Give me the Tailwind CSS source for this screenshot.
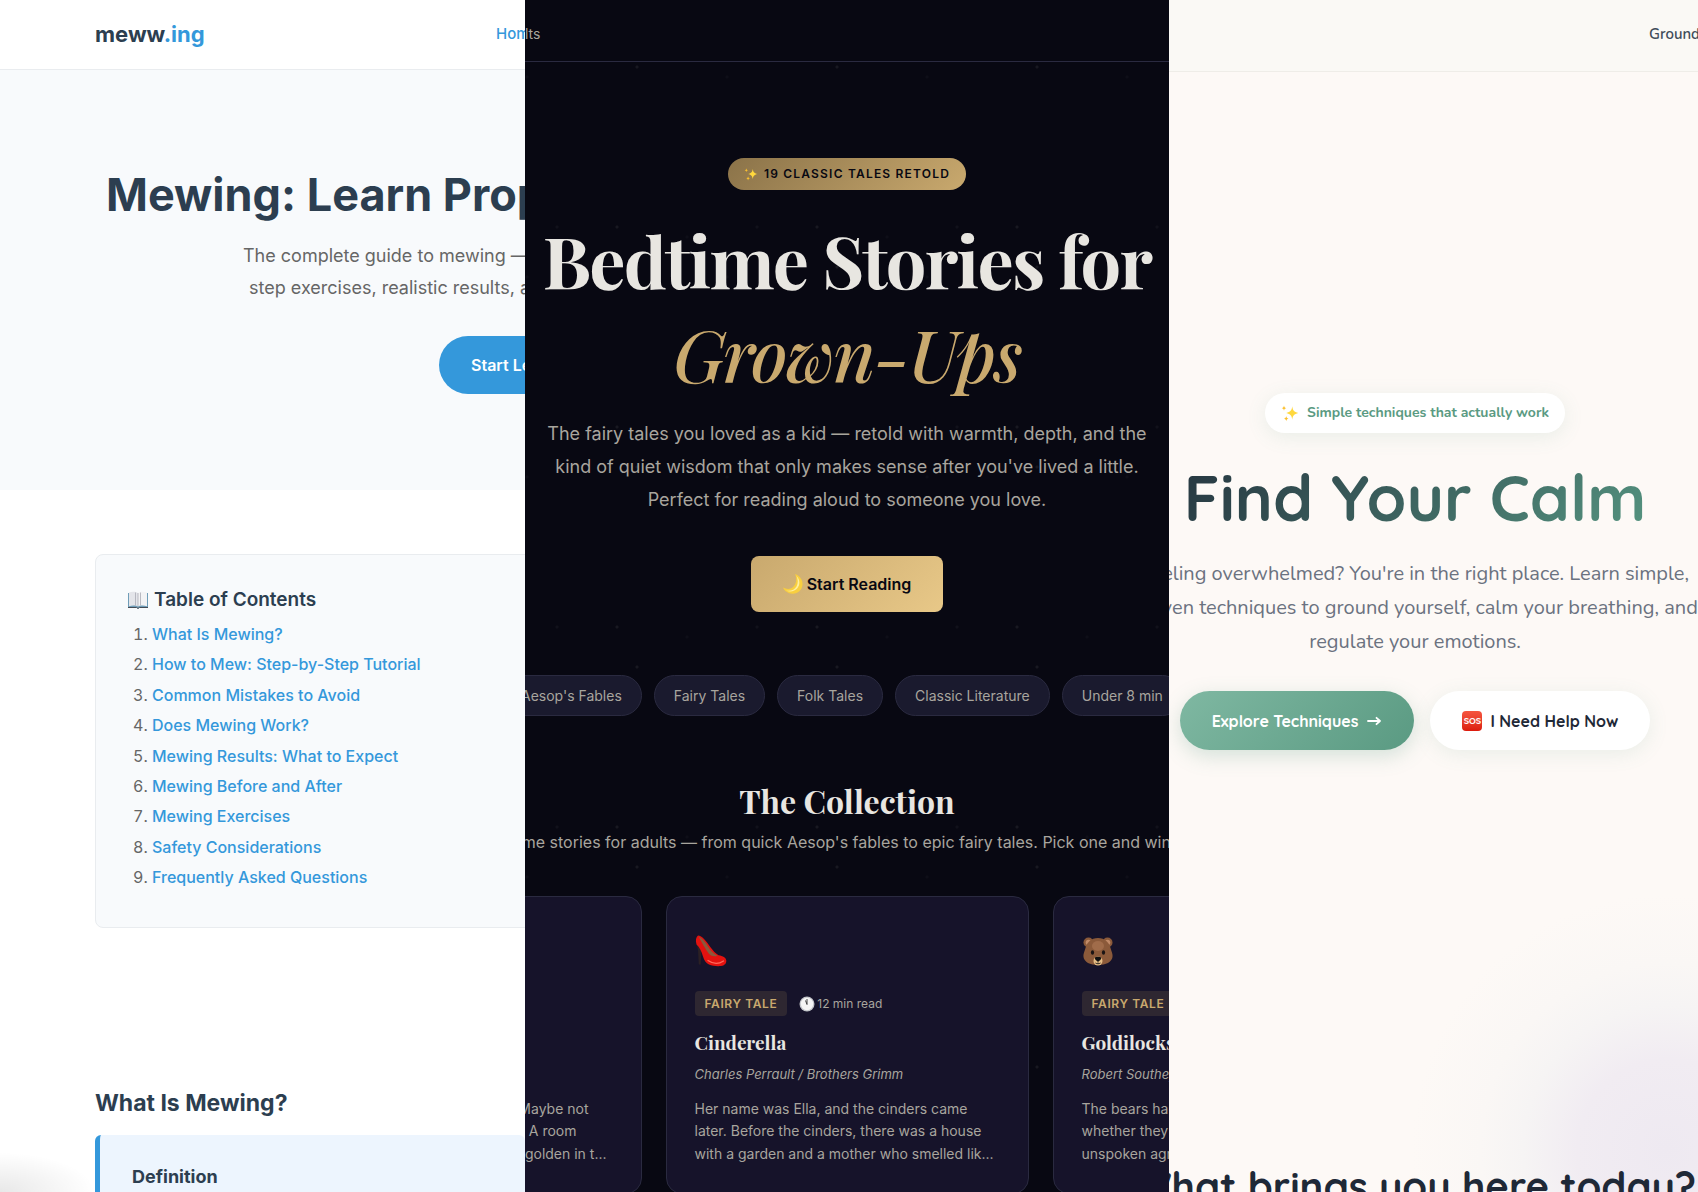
<!DOCTYPE html>
<html lang="en">
<head>
  <meta charset="UTF-8" />
  <meta name="viewport" content="width=device-width, initial-scale=1.0"/>
  <title>Project Showcase</title>
  <script src="https://cdn.jsdelivr.net/npm/@tailwindcss/browser@4"></script>
</head>
<body class="h-screen overflow-hidden grid grid-cols-[525fr_644fr_529fr] font-['Inter',sans-serif]">

  <!-- shared icons -->
  <svg class="hidden" aria-hidden="true">
    <symbol id="sparkles" viewBox="0 0 24 24">
      <path d="M15 3c.7 5.600 2.400 7.600 8 9-5.600 1.400-7.300 3.400-8 9-.7-5.600-2.400-7.600-8-9 5.600-1.400 7.300-3.400 8-9z" fill="#ffd83d"/>
      <path d="M4 2c.3 2.200 1 3 3 3.500C5 6 4.300 6.800 4 9c-.3-2.200-1-3-3-3.500C3 5 3.700 4.200 4 2z" fill="#fbc02f"/>
      <path d="M7 16c.3 2.200 1 3 3 3.500-2 .5-2.700 1.300-3 3.500-.3-2.200-1-3-3-3.500 2-.5 2.700-1.300 3-3.500z" fill="#fbc02f"/>
    </symbol>
  </svg>

  <!-- meww.ing -->
  <section class="relative overflow-hidden bg-white whitespace-nowrap text-[#666]">
    <header class="h-[70px] pl-[95px] flex items-center border-b border-[#e9ecef]">
      <a href="#" class="w-[401px] shrink-0 text-[22px] font-bold text-[#2c3e50]">meww<span class="text-[#3498db]">.ing</span></a>
      <a href="#" class="text-[15px] font-medium text-[#3498db]">Home</a>
    </header>

    <div class="bg-[#f8fafc] py-24">
      <h1 class="pl-[106px] text-[45px] leading-[58px] font-bold text-[#2c3e50]">Mewing: Learn Proper</h1>
      <p class="mt-4 pl-[243px] text-lg leading-8">The complete guide to mewing — step-by-<span class="block pl-1.5">step exercises, realistic results, and more</span></p>
      <button class="mt-8 ml-[439px] h-[58px] px-8 rounded-full bg-[#3498db] text-white text-base font-semibold">Start Learning</button>
    </div>

    <nav class="mt-16 ml-[95px] -mr-3 pt-8 px-8 pb-[34px] rounded-lg border border-[#e9ecef] bg-[#f8fafc]">
      <h2 class="flex items-center gap-1.5 text-[19px] leading-[26px] font-semibold text-[#2c3e50]">
        <svg class="w-5 h-5" viewBox="0 0 20 20">
          <path d="M0 3h20v14.500h-8.500L10 18.500 8.500 17.500H0z" fill="#6f9db8"/>
          <path d="M1 2.500C4 1.500 8 1.700 10 3v13.500c-2-1.200-6-1.200-9-.3z" fill="#e4e5ea"/>
          <path d="M19 2.500C16 1.500 12 1.700 10 3v13.500c2-1.200 6-1.200 9-.3z" fill="#f3f3f5"/>
          <path d="M10 3v13.500M7.500 2.500V15.500M12.500 2.500V15.500" stroke="#a9abb5" stroke-width=".8"/>
          <path d="M0 17.500h8.500l1.500 1 1.500-1H20" stroke="#454b55" stroke-width="1" fill="none"/>
        </svg>
        Table of Contents
      </h2>
      <ol class="mt-1.5 pl-6 list-decimal text-base leading-[1.9] [&_a]:text-[#3498db] [&_a]:font-medium">
        <li><a href="#">What Is Mewing?</a></li>
        <li><a href="#">How to Mew: Step-by-Step Tutorial</a></li>
        <li><a href="#">Common Mistakes to Avoid</a></li>
        <li><a href="#">Does Mewing Work?</a></li>
        <li><a href="#">Mewing Results: What to Expect</a></li>
        <li><a href="#">Mewing Before and After</a></li>
        <li><a href="#">Mewing Exercises</a></li>
        <li><a href="#">Safety Considerations</a></li>
        <li><a href="#">Frequently Asked Questions</a></li>
      </ol>
    </nav>

    <div class="mt-[159px] ml-[95px]">
      <h2 class="text-[23px] leading-8 font-bold text-[#2c3e50]">What Is Mewing?</h2>
      <div class="mt-4 pt-7 pl-8 h-40 rounded-md border-l-[5px] border-[#3498db] bg-[#edf5fe]">
        <h3 class="text-lg leading-7 font-bold text-[#2c3e50]">Definition</h3>
      </div>
    </div>
    <div class="absolute bottom-0 left-0 w-24 h-10 bg-[radial-gradient(ellipse_at_bottom_left,rgba(0,0,0,0.09),transparent_70%)]"></div>
  </section>

  <!-- Bedtime stories -->
  <section class="overflow-hidden whitespace-nowrap bg-[#080812] text-[#a8a59e] bg-[radial-gradient(circle_at_112px_67px,#181821_1px,transparent_2px),radial-gradient(circle_at_92px_27px,#181821_1px,transparent_2px),radial-gradient(circle_at_32px_27px,#11111b_1px,transparent_2px),radial-gradient(circle_at_162px_37px,#0e0e18_1px,transparent_2px),radial-gradient(circle_at_2px_77px,#0e0e18_1px,transparent_2px)] bg-[length:200px_200px]">
    <header class="h-[62px] pt-1.5 flex items-center border-b border-[#2a2a40] bg-[#080812]">
      <a href="#" class="text-sm">lts</a>
    </header>

    <div class="pt-24 flex flex-col items-center text-center">
      <div class="h-8 px-4 flex items-center gap-1.5 rounded-2xl bg-linear-135 from-[#8b7349] to-[#c9a96e] text-xs font-semibold tracking-widest text-[#080812]">
        <svg class="w-3.5 h-3.5"><use href="#sparkles"/></svg>
        19 CLASSIC TALES RETOLD
      </div>
      <h1 class="mt-[22px] text-7xl leading-[94px] font-bold tracking-tight font-['Playfair_Display','Liberation_Serif',serif] text-[#e8e6e1]">Bedtime Stories for<em class="block font-medium text-[#c9a96e]">Grown-Ups</em></h1>
      <p class="mt-[17px] text-lg leading-[33px]">The fairy tales you loved as a kid — retold with warmth, depth, and the<br>kind of quiet wisdom that only makes sense after you've lived a little.<br>Perfect for reading aloud to someone you love.</p>
      <button class="mt-10 h-14 px-8 flex items-center gap-1 rounded-lg bg-linear-135 from-[#c9a96e] to-[#e8c888] text-base font-semibold text-[#080812]">
        <svg class="w-5 h-5" viewBox="0 0 20 20">
          <path d="M12 0c5 2 8 6 7.500 11-.6 5.400-5 9-10 8.700C5 19.500 1.500 17 0 13.500c4 2.400 8.500 1.800 11-1.500 2.600-3.500 3-8 1-12z" fill="#f9cf3f"/>
          <path d="M13.500 2c3.500 3.500 3.800 8.500 1 12-2.800 3.500-7.500 4.500-11.500 2.500 4.500 1 8.500-.5 10.500-4 1.800-3.200 1.600-7 0-10.500z" fill="#fff0a0"/>
        </svg>
        Start Reading
      </button>
    </div>

    <div class="mt-[63px] -ml-6 flex gap-3 text-sm [&_button]:h-[41px] [&_button]:px-[19px] [&_button]:shrink-0 [&_button]:rounded-full [&_button]:border [&_button]:border-[#2a2a40] [&_button]:bg-[#1a1a2e]">
      <button>Aesop's Fables</button>
      <button>Fairy Tales</button>
      <button>Folk Tales</button>
      <button>Classic Literature</button>
      <button>Under 8 min</button>
    </div>

    <div class="mt-[65px] flex flex-col items-center">
      <h2 class="text-[32px] leading-10 font-bold font-['Playfair_Display','Liberation_Serif',serif] text-[#e8e6e1]">The Collection</h2>
      <p class="mt-[7px] text-base leading-7">19 bedtime stories for adults — from quick Aesop's fables to epic fairy tales. Pick one and wind down.</p>
    </div>

    <div class="mt-10 flex justify-center gap-6 [&_article]:w-[363px] [&_article]:shrink-0 [&_article]:p-7 [&_article]:rounded-2xl [&_article]:border [&_article]:border-[#2a2a40] [&_article]:bg-[#16132a]">
      <article class="text-sm leading-[1.6] text-right">
        <div class="h-[173px]"></div>
        <p class="pr-6">Maybe not</p>
        <p class="pr-9">A room</p>
        <p class="pr-1.5">golden in t...</p>
      </article>
      <article>
        <svg class="mt-2.5 w-8 h-8" viewBox="0 0 32 32">
          <path d="M1.800 9l4.700 6-.8 14.500H3.800L3 15z" fill="#2b2024"/>
          <path d="M3 .5C1 2 .3 5.500 1.500 9.500c3 2.500 5 7 6.500 12 1.200 4 3 6.500 6 8 3 1.300 8 2 12 1.500 3.500-.4 5.500-2.500 5.300-5.500-.3-3-3.300-4.500-7.800-5.200C17 16 14 9 9 4 7 2 5 .5 3 .5z" fill="#e3120f"/>
          <path d="M3.500 1.500C7 3 10 6.500 13 11.500c2.500 4 5.500 7.500 9.500 9.200-3.500 1.300-7 .3-9-2.500C10.500 14 7 8 3.500 1.500z" fill="#8a5a3c"/>
          <path d="M13 25.500c5 3.500 11 3.500 15.500.5" stroke="#ff6a5c" stroke-width="1.300" fill="none" stroke-linecap="round"/>
        </svg>
        <div class="mt-6 flex items-center gap-3">
          <span class="h-[25px] px-2.5 flex items-center rounded bg-[#2e2731] text-xs font-semibold tracking-wider text-[#c9a96e]">FAIRY TALE</span>
          <span class="flex items-center gap-0.5 text-xs">
            <svg class="w-4 h-4" viewBox="0 0 16 16"><circle cx="8" cy="8" r="7.500" fill="#c3c5ca"/><circle cx="8" cy="8" r="6.200" fill="#f5f5f5"/><path d="M8 8.500V3M8 8.500L6.500 4.500" stroke="#333" stroke-width=".9"/></svg>
            12 min read
          </span>
        </div>
        <h3 class="mt-3 text-[19px] leading-7 font-bold font-['Playfair_Display','Liberation_Serif',serif] text-[#e8e6e1]">Cinderella</h3>
        <p class="mt-2 text-[13px] leading-5 italic">Charles Perrault / Brothers Grimm</p>
        <p class="mt-3.5 text-sm leading-[1.6]">Her name was Ella, and the cinders came<br>later. Before the cinders, there was a house<br>with a garden and a mother who smelled lik...</p>
      </article>
      <article>
        <svg class="mt-2.5 w-8 h-8" viewBox="0 0 32 32">
          <circle cx="6.500" cy="7.500" r="5" fill="#8b5a3a"/><circle cx="25.500" cy="7.500" r="5" fill="#8b5a3a"/>
          <circle cx="6.500" cy="7.500" r="2.800" fill="#c08a68"/><circle cx="25.500" cy="7.500" r="2.800" fill="#c08a68"/>
          <path d="M16 3c7 0 11 4.500 12.500 10 1.200 4 2.500 6 2 9-.7 5-6.500 8-14.500 8S2.200 27 1.500 22c-.5-3 .8-5 2-9C5 7.500 9 3 16 3z" fill="#8b5a3a"/>
          <ellipse cx="16" cy="11" rx="6" ry="5" fill="#a06c4a"/>
          <ellipse cx="16" cy="26" rx="4.500" ry="4.500" fill="#e6bd85"/>
          <ellipse cx="10.500" cy="17.500" rx="1.600" ry="2.200" fill="#1a1414"/><ellipse cx="21.500" cy="17.500" rx="1.600" ry="2.200" fill="#1a1414"/>
          <path d="M12.800 23c0-1.600 6.400-1.600 6.400 0 0 1.800-2 3.200-3.200 3.200S12.800 24.800 12.800 23z" fill="#111"/>
          <path d="M16 26v1.500M13.500 28c1.500 1 3.500 1 5 0" stroke="#111" stroke-width=".9" fill="none"/>
        </svg>
        <div class="mt-6 flex items-center gap-3">
          <span class="h-[25px] px-2.5 flex items-center rounded bg-[#2e2731] text-xs font-semibold tracking-wider text-[#c9a96e]">FAIRY TALE</span>
        </div>
        <h3 class="mt-3 text-[19px] leading-7 font-bold font-['Playfair_Display','Liberation_Serif',serif] text-[#e8e6e1]">Goldilocks</h3>
        <p class="mt-2 text-[13px] leading-5 italic">Robert Southey</p>
        <p class="mt-3.5 text-sm leading-[1.6]">The bears had<br>whether they<br>unspoken agreement</p>
      </article>
    </div>
  </section>

  <!-- Find your calm -->
  <section class="relative overflow-hidden whitespace-nowrap bg-[#fdf9f6] font-['Nunito','Open_Sans',sans-serif]">
    <div class="absolute -bottom-[257px] -right-[269px] w-[600px] h-[600px] bg-[radial-gradient(circle_closest-side,#eee9f1_0%,#f1ecf2_30%,#f6f4f4_48%,#faf7f5_62%,#fdf9f6_85%)]"></div>
    <header class="relative h-[72px] pb-0.5 pl-[480px] flex items-center border-b border-[#efede8] bg-[#faf9f5]">
      <a href="#" class="text-[15px] font-semibold text-[#3f4d5a]">Grounding</a>
    </header>

    <div class="relative -ml-[37px] pt-[321px] pb-80 flex flex-col items-center text-center">
      <div class="h-10 px-4 flex items-center gap-2 rounded-full bg-white shadow-[0_4px_20px_rgba(90,154,130,0.12)] text-sm font-bold text-[#5a9a82]">
        <svg class="w-[18px] h-[18px]"><use href="#sparkles"/></svg>
        Simple techniques that actually work
      </div>
      <h1 class="mt-6 text-[64px] leading-20 font-bold font-['Quicksand','Lato',sans-serif] text-transparent bg-clip-text bg-linear-135 from-[#263640] to-[#559480]">Find Your Calm</h1>
      <p class="mt-5 text-xl leading-[34px] text-[#6b7280]">Feeling overwhelmed? You're in the right place. Learn simple,<br>proven techniques to ground yourself, calm your breathing, and<br>regulate your emotions.</p>
      <div class="mt-8 flex gap-4 text-base font-bold font-['Quicksand','Lato',sans-serif]">
        <button class="h-[59px] px-8 flex items-center gap-2 rounded-full bg-linear-135 from-[#7fb8a2] to-[#5a9a82] text-white shadow-[0_6px_20px_rgba(90,154,130,0.25)]">
          Explore Techniques
          <svg class="w-4 h-4" viewBox="0 0 16 16" fill="none" stroke="currentColor" stroke-width="1.800" stroke-linecap="round" stroke-linejoin="round"><path d="M2 8h12M10.500 4.800L14 8l-3.500 3.200"/></svg>
        </button>
        <button class="h-[59px] px-8 flex items-center gap-2 rounded-full bg-white text-[#1f2937] shadow-[0_4px_20px_rgba(90,154,130,0.12)]">
          <span class="w-5 h-5 flex items-center justify-center rounded bg-linear-to-b from-[#f5553f] to-[#dc1a0c] text-[9px] text-white">SOS</span>
          I Need Help Now
        </button>
      </div>
    </div>
    <div class="relative -ml-[37px] pt-[92px] flex justify-center">
      <h2 class="text-[40px] leading-12 font-bold font-['Quicksand','Lato',sans-serif] text-[#1f2937]">What brings you here today?</h2>
    </div>
  </section>
</body>
</html>
